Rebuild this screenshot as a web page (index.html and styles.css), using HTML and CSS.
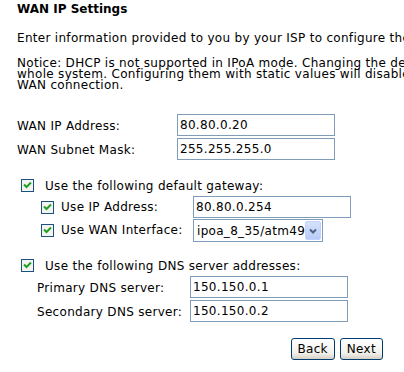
FILE: index.html
```html
<!DOCTYPE html>
<html lang="en">
<head>
    <meta charset="UTF-8">
    <title>WAN IP Settings</title>
    <link rel="stylesheet" href="styles.css">
</head>
<body>
    <div class="page">
        <h1>WAN IP Settings</h1>
        <p class="intro">Enter information provided to you by your ISP to configure the WAN IP settings.</p>
        <p class="notice">Notice: DHCP is not supported in IPoA mode. Changing the default gateway or the DNS effects the<br>
            whole system. Configuring them with static values will disable the automatic assignment from DHCP or other<br>
            WAN connection.</p>

        <!-- address / mask -->
        <div class="fields">
            <span class="label">WAN IP Address:</span>
            <span class="field">80.80.0.20</span>
            <span class="label">WAN Subnet Mask:</span>
            <span class="field">255.255.255.0</span>
        </div>

        <!-- gateway -->
        <div class="check-row gw-check">
            <svg class="cb" width="13" height="13" viewBox="0 0 13 13"><rect x="0.5" y="0.5" width="12" height="12" fill="#f3f3ef" stroke="#1c5180"/><path d="M3 5.5 5.5 8 10 3.5" fill="none" stroke="#21a121" stroke-width="2"/></svg>
            <span>Use the following default gateway:</span>
        </div>
        <div class="sub-fields gw-fields">
            <span class="check-row">
                <svg class="cb" width="13" height="13" viewBox="0 0 13 13"><rect x="0.5" y="0.5" width="12" height="12" fill="#f3f3ef" stroke="#1c5180"/><path d="M3 5.5 5.5 8 10 3.5" fill="none" stroke="#21a121" stroke-width="2"/></svg>
                <span>Use IP Address:</span>
            </span>
            <span class="field">80.80.0.254</span>
            <span class="check-row">
                <svg class="cb" width="13" height="13" viewBox="0 0 13 13"><rect x="0.5" y="0.5" width="12" height="12" fill="#f3f3ef" stroke="#1c5180"/><path d="M3 5.5 5.5 8 10 3.5" fill="none" stroke="#21a121" stroke-width="2"/></svg>
                <span>Use WAN Interface:</span>
            </span>
            <span class="select">
                <span class="select-text">ipoa_8_35/atm49</span>
                <span class="select-arrow">
                    <svg width="8" height="6" viewBox="0 0 8 6"><path d="M1 1.5 4 4.5 7 1.5" fill="none" stroke="#4d6185" stroke-width="2"/></svg>
                </span>
            </span>
        </div>

        <!-- dns -->
        <div class="check-row dns-check">
            <svg class="cb" width="13" height="13" viewBox="0 0 13 13"><rect x="0.5" y="0.5" width="12" height="12" fill="#f3f3ef" stroke="#1c5180"/><path d="M3 5.5 5.5 8 10 3.5" fill="none" stroke="#21a121" stroke-width="2"/></svg>
            <span>Use the following DNS server addresses:</span>
        </div>
        <div class="sub-fields dns-fields">
            <span class="label">Primary DNS server:</span>
            <span class="field">150.150.0.1</span>
            <span class="label">Secondary DNS server:</span>
            <span class="field">150.150.0.2</span>
        </div>

        <div class="buttons">
            <button>Back</button>
            <button>Next</button>
        </div>
    </div>
</body>
</html>
```

FILE: styles.css
```css
/* Page */
body {
    margin: 0;
    font-family: "DejaVu Sans", Verdana, sans-serif;
    font-size: 12px;
    letter-spacing: 0.3px;
    color: #000;
    background: #fff;
    overflow: hidden;
}

.page {
    padding: 2px 0 0 17px;
    width: 366px;
    white-space: nowrap;
}

h1 {
    margin: 0;
    font-size: 12px;
    line-height: 14px;
    font-weight: bold;
    letter-spacing: 0;
}

p {
    margin: 0;
    line-height: 11px;
}

.intro {
    margin-top: 17px;
}

.notice {
    margin-top: 14px;
}

/* Text fields */
.fields {
    display: grid;
    grid-template-columns: 160px 158px;
    grid-auto-rows: 22px;
    row-gap: 2px;
    align-items: center;
    margin-top: 23px;
}

.label {
    padding-top: 2px;
}

.field {
    box-sizing: border-box;
    height: 22px;
    border: 1px solid #7f9db9;
    padding: 0 2px;
    line-height: 20px;
    background: #fff;
}

/* Checkboxes */
.check-row {
    display: flex;
    align-items: center;
}

.cb {
    flex: none;
    margin-right: 11px;
}

.gw-check,
.dns-check {
    margin-left: 4px;
    height: 13px;
}

.gw-check {
    margin-top: 19px;
}

.dns-check {
    margin-top: 18px;
}

.sub-fields {
    display: grid;
    grid-auto-rows: 22px;
    align-items: center;
    margin-top: 4px;
}

.gw-fields {
    grid-template-columns: 152px 158px;
    row-gap: 1px;
    margin-left: 24px;
}

.gw-fields .cb {
    margin-right: 7px;
}

.dns-fields {
    grid-template-columns: 153px 158px;
    row-gap: 2px;
    margin-left: 20px;
}

/* Fake select */
.select {
    box-sizing: border-box;
    width: 130px;
    height: 23px;
    border: 1px solid #7f9db9;
    padding: 1px;
    display: flex;
    align-items: center;
    align-self: start;
}

.select-text {
    flex: 1;
    padding-left: 2px;
}

.select-arrow {
    box-sizing: border-box;
    width: 16px;
    height: 19px;
    border: 1px solid #c3d3fd;
    border-radius: 2px;
    background: linear-gradient(#d6e2fc, #b7cbf6);
    display: flex;
    align-items: center;
    justify-content: center;
}

/* Buttons */
.buttons {
    display: flex;
    justify-content: flex-end;
    gap: 5px;
    margin-top: 16px;
}

.buttons button {
    height: 22px;
    padding: 0 6px;
    font-family: "DejaVu Sans", Verdana, sans-serif;
    font-size: 12px;
    letter-spacing: 0.3px;
    color: #000;
    border: 1px solid #003c74;
    border-radius: 3px;
    background: linear-gradient(#ffffff, #f2f1ea 70%, #d6d0c5);
}
```
